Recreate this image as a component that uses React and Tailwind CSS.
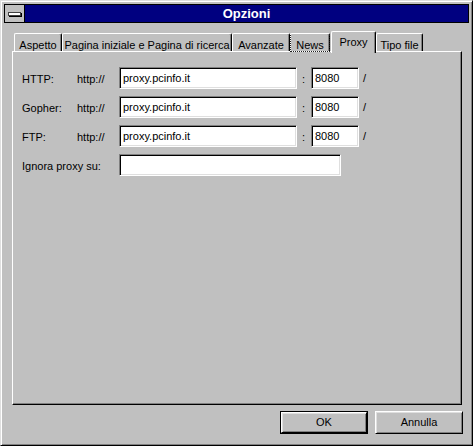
import React from 'react'

const raised =
  'border border-t-white border-l-white border-r-black border-b-black shadow-[inset_1px_1px_#dfdfdf,inset_-1px_-1px_#808080]'
const sunken =
  'border border-t-[#808080] border-l-[#808080] border-r-white border-b-white shadow-[inset_1px_1px_#000,inset_-1px_-1px_#dfdfdf] bg-white'

const tabs = [
  { label: 'Aspetto', w: 'w-[48px]' },
  { label: 'Pagina iniziale e Pagina di ricerca', w: 'w-[170px]' },
  { label: 'Avanzate', w: 'w-[58px]' },
  { label: 'News', w: 'w-[40px]', focus: true },
  { label: 'Proxy', w: 'w-[45px]', active: true },
  { label: 'Tipo file', w: 'w-[47px]' },
]

const proxies = [
  { name: 'HTTP:', host: 'proxy.pcinfo.it', port: '8080' },
  { name: 'Gopher:', host: 'proxy.pcinfo.it', port: '8080' },
  { name: 'FTP:', host: 'proxy.pcinfo.it', port: '8080' },
]

function Tab({ label, w, active, focus }) {
  if (active) {
    return (
      <div
        className={`${w} relative z-10 -mb-[2px] ml-[1px] h-[22px] bg-[#c0c0c0] rounded-tl-[2px] rounded-tr-[2px] border-t border-l border-r border-t-white border-l-white border-r-black shadow-[inset_-1px_0_#808080] flex justify-center pt-[2px]`}
      >
        {label}
      </div>
    )
  }
  return (
    <div
      className={`${w} relative h-[18px] rounded-tl-[2px] rounded-tr-[2px] border-t border-l border-r border-t-white border-l-white border-r-black shadow-[inset_-1px_0_#808080] flex justify-center pt-[3px]`}
    >
      {label}
      {focus && (
        <div className="absolute left-[-1px] right-[-1px] top-[1px] bottom-[-1px] border border-t-0 border-dotted border-[#202020]" />
      )}
    </div>
  )
}

function Field({ value, w }) {
  return (
    <div className={`${sunken} ${w} h-[22px] flex items-center pl-[3px] text-black`}>
      {value}
    </div>
  )
}

export default function App() {
  return (
    <div className="w-[473px] h-[446px] bg-[#c0c0c0] text-[11px] text-black font-['Liberation_Sans',Arial,sans-serif] border border-t-[#dfdfdf] border-l-[#dfdfdf] border-r-black border-b-black shadow-[inset_1px_1px_#fff,inset_-1px_-1px_#808080] p-[3px] flex flex-col">
      {/* caption */}
      <div className="h-[19px] border border-black flex">
        <div className="w-[20px] border-r border-black bg-[#c0c0c0] flex items-center justify-center">
          <div className="w-[13px] h-[4px] bg-white border border-[#404040] shadow-[1px_1px_#000]" />
        </div>
        <div className="flex-1 bg-[#000080] text-white font-bold text-[13px] flex items-center justify-center leading-none">
          Opzioni
        </div>
      </div>

      {/* tab strip */}
      <div className="mt-[8px] ml-[8px] pl-[2px] h-[20px] flex items-end">
        {tabs.map(t => (
          <Tab key={t.label} {...t} />
        ))}
      </div>

      {/* tab page */}
      <div className="ml-[8px] w-[450px] h-[354px] border border-t-white border-l-white border-r-black border-b-black shadow-[inset_-1px_-1px_#808080] pt-[15px] pl-[9px] flex flex-col gap-[7px]">
        {proxies.map(p => (
          <div key={p.name} className="flex items-center h-[22px]">
            <span className="w-[55px] pt-[2px]">{p.name}</span>
            <span className="w-[42px] pt-[2px]">http://</span>
            <Field value={p.host} w="w-[178px]" />
            <span className="w-[14px] pl-[5px] pt-[2px]">:</span>
            <Field value={p.port} w="w-[48px]" />
            <span className="pl-[4px]">/</span>
          </div>
        ))}
        <div className="flex items-center h-[22px]">
          <span className="w-[97px] pt-[2px]">Ignora proxy su:</span>
          <Field value="" w="w-[222px]" />
        </div>
      </div>

      {/* buttons */}
      <div className="mt-[6px] mr-[6px] flex justify-end gap-[7px]">
        <div className="w-[88px] h-[23px] border border-black">
          <button className={`${raised} w-full h-full flex items-center justify-center`}>OK</button>
        </div>
        <button className={`${raised} w-[88px] h-[23px] flex items-center justify-center`}>Annulla</button>
      </div>
    </div>
  )
}
